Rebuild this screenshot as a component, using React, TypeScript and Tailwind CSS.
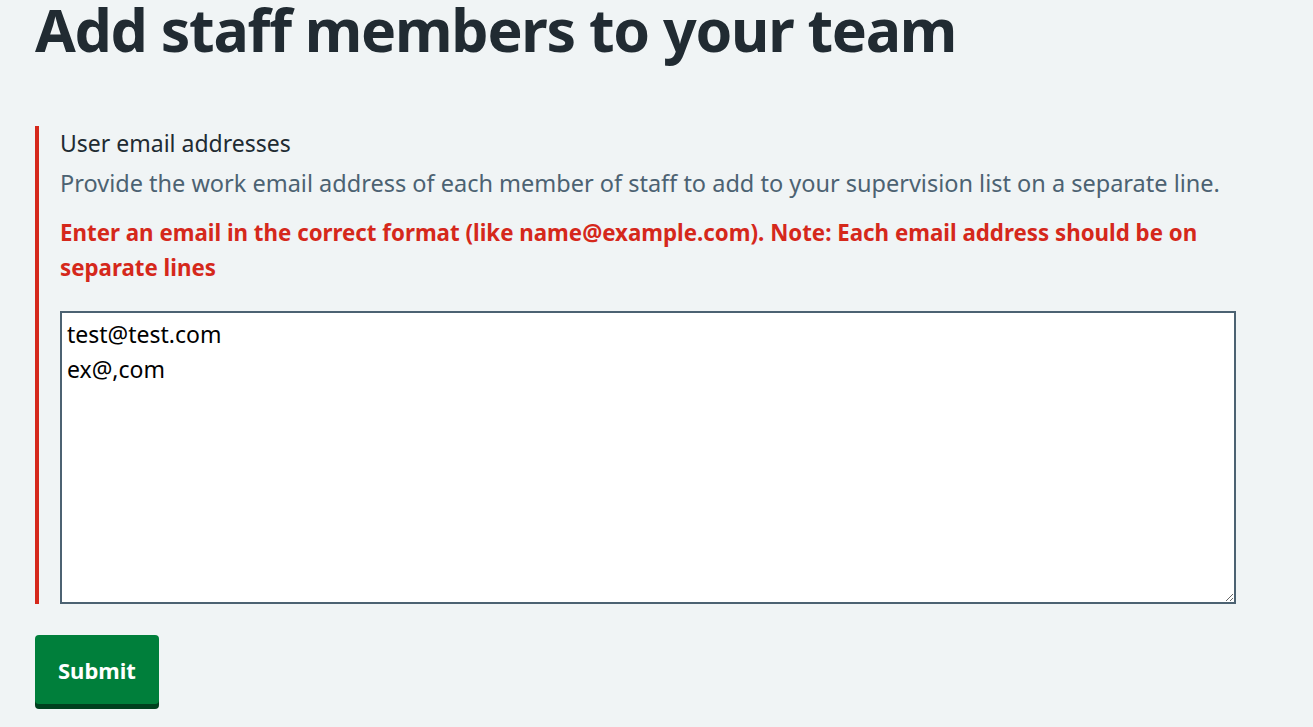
export default function App() {
  return (
    <div className="min-h-[727px] bg-[#f0f4f5] font-['Noto_Sans',sans-serif] text-[#212b32]">
      <div className="px-[35px]">
        <h1 className="text-[59px] font-bold leading-[58px] tracking-[-1.25px]">
          Add staff members to your team
        </h1>

        <div className="mt-[68px] border-l-[4px] border-[#d5281b] pl-[21px] pr-[42px]">
          <label className="block text-[23px] leading-[34px]">User email addresses</label>
          <div className="mt-[6px] text-[23.5px] leading-[34px] text-[#4c6272]">
            Provide the work email address of each member of staff to add to your supervision list on a separate line.
          </div>
          <div className="mt-[15px] text-[22.3px] font-bold leading-[35px] text-[#d5281b]">
            Enter an email in the correct format (like name@example.com). Note: Each email address should be on separate lines
          </div>
          <textarea
            className="mt-[26px] block h-[293px] w-full resize-y border-2 border-[#4c6272] bg-white px-[5px] py-[4px] text-[23px] leading-[35px] text-black outline-none"
            defaultValue={'test@test.com\nex@,com'}
          />
        </div>

        <button className="mt-[31px] h-[69px] rounded-[4px] bg-[#007f3b] px-[23px] text-[22px] font-bold leading-[32px] text-white shadow-[0_5px_0_#00401e]">
          Submit
        </button>
      </div>
    </div>
  )
}
